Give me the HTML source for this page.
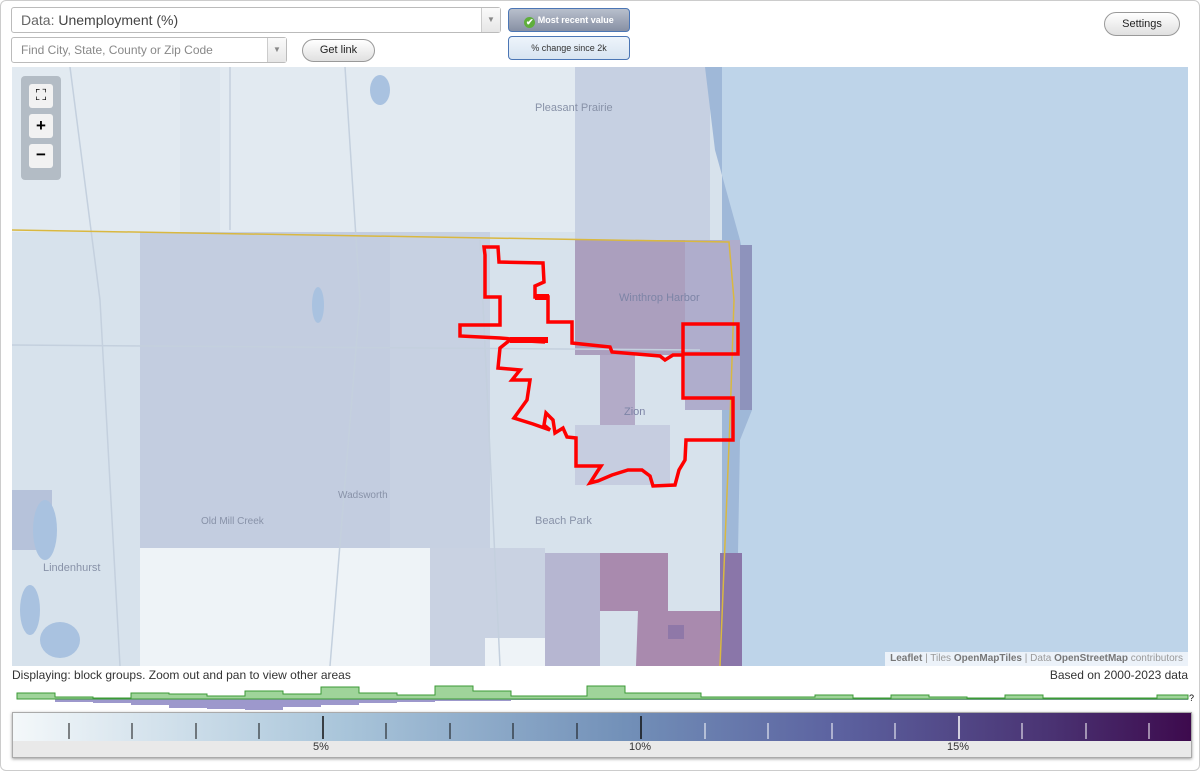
<!DOCTYPE html>
<html><head><meta charset="utf-8"><style>
body{margin:0;width:1200px;height:771px;background:#fff;font-family:"Liberation Sans",sans-serif;position:relative;overflow:hidden}
.frame{position:absolute;left:0;top:0;width:1198px;height:769px;border:1px solid #ccc;border-radius:6px}
.sel{position:absolute;background:#fff;border:1px solid #bbb;border-radius:3px;color:#444;font-size:14px;box-sizing:border-box}
.sel .arr{position:absolute;right:0;top:0;bottom:0;width:18px;border-left:1px solid #ccc;background:linear-gradient(#fafafa,#e6e6e6);color:#888;font-size:8px;text-align:center}
.btn{position:absolute;border:1px solid #999;border-radius:13px;background:linear-gradient(#fff,#e0e0e0);font-size:11px;text-align:center;color:#222;box-sizing:border-box}
.tog{position:absolute;border:1px solid #4b76b5;border-radius:4px;font-size:9px;text-align:center;box-sizing:border-box}
.lbl{position:absolute;font-size:11px;color:#8892a8}
</style></head><body>
<div class="frame"></div>
<div class="sel" style="left:11px;top:7px;width:490px;height:26px;line-height:24px;padding-left:9px"><span style="color:#666">Data:</span> Unemployment (%)<div class="arr" style="line-height:24px">▼</div></div>
<div class="sel" style="left:11px;top:37px;width:276px;height:26px;line-height:24px;padding-left:9px;font-size:12px;color:#888">Find City, State, County or Zip Code<div class="arr" style="line-height:24px">▼</div></div>
<div class="btn" style="left:302px;top:39px;width:73px;height:23px;line-height:21px">Get link</div>
<div class="tog" style="left:508px;top:8px;width:122px;height:24px;line-height:22px;background:linear-gradient(#b8bfcc,#8790a4);color:#fff;font-weight:bold"><span style="display:inline-block;width:11px;height:11px;border-radius:50%;background:#5fae3c;color:#fff;font-size:9px;line-height:11px;vertical-align:-2px">✔</span> Most recent value</div>
<div class="tog" style="left:508px;top:36px;width:122px;height:24px;line-height:22px;background:linear-gradient(#eef4fb,#d8e4f1);color:#333">% change since 2k</div>
<div class="btn" style="left:1104px;top:12px;width:76px;height:24px;line-height:22px">Settings</div>

<div style="position:absolute;left:12px;top:67px;width:1176px;height:599px;overflow:hidden;background:#bed4e9">
<svg width="1176" height="599" viewBox="12 67 1176 599" style="position:absolute;left:0;top:0">
<rect x="12" y="67" width="710" height="599" fill="#d7e2ec"/>
<rect x="12" y="67" width="568" height="165" fill="#e2eaf1"/>
<rect x="180" y="67" width="40" height="165" fill="#dde6ee"/>
<rect x="575" y="67" width="135" height="175" fill="#c6d0e2"/>
<path d="M705 67 L715 150 L740 240 L752 300 L752 410 L740 440 L738 553 L742 666 L722 666 L722 67Z" fill="#9fb8d8"/>
<rect x="140" y="232" width="250" height="316" fill="#c3cde0"/>
<rect x="390" y="232" width="100" height="316" fill="#c7d1e2"/>
<rect x="12" y="490" width="40" height="60" fill="#b6c2da"/>
<rect x="575" y="240" width="110" height="115" fill="#ab9fbe"/>
<rect x="685" y="240" width="55" height="170" fill="#afadcc"/>
<rect x="740" y="245" width="12" height="165" fill="#8e93bc"/>
<rect x="600" y="355" width="35" height="80" fill="#b3abc8"/>
<rect x="575" y="425" width="95" height="60" fill="#c6cde0"/>
<rect x="140" y="548" width="290" height="118" fill="#eef3f7"/>
<rect x="430" y="548" width="115" height="118" fill="#c9d2e2"/>
<rect x="485" y="638" width="60" height="28" fill="#eef3f7"/>
<rect x="545" y="553" width="55" height="113" fill="#b6b6d1"/>
<rect x="600" y="553" width="68" height="58" fill="#a98aae"/>
<path d="M638 611 L720 611 L720 666 L636 666Z" fill="#a98aae"/>
<rect x="720" y="553" width="22" height="113" fill="#8a76a9"/>
<rect x="668" y="625" width="16" height="14" fill="#8f78a8"/>
<g fill="none" stroke="#c4d0de" stroke-width="1.5"><path d="M230 67 L230 230"/><path d="M12 345 L700 350"/><path d="M480 240 L500 666"/><path d="M345 67 L360 300 L330 666"/><path d="M70 67 L100 300 L120 666"/></g>
<path d="M12 230 L729 242 L734 300 L730 420 L720 666" fill="none" stroke="#d9b840" stroke-width="1.5"/>
<g fill="#a9c2e0"><ellipse cx="380" cy="90" rx="10" ry="15"/><ellipse cx="318" cy="305" rx="6" ry="18"/><ellipse cx="45" cy="530" rx="12" ry="30"/><ellipse cx="30" cy="610" rx="10" ry="25"/><ellipse cx="60" cy="640" rx="20" ry="18"/></g>
<path d="M485 255 L484 247 L498 247 L499 262 L543 263 L544 282 L535 286 L535 297 L548 297 L548 322 L572 322 L572 343 L610 347 L612 352 L660 356 L665 360 L673 355 L683 355 L683 324 L738 324 L738 354 L683 354 L683 398 L733 398 L733 440 L686 440 L685 460 L679 470 L675 485 L653 486 L650 476 L642 470 L628 470 L612 475 L598 481 L590 483 L597 472 L601 466 L576 466 L576 438 L567 437 L563 428 L555 433 L553 420 L546 413 L544 425 L550 430 L533 424 L514 418 L527 400 L530 380 L512 380 L520 370 L498 368 L500 348 L510 340 L545 342 L500 338 L460 336 L460 325 L500 325 L500 297 L485 297Z" fill="none" stroke="#f00" stroke-width="3.5" stroke-linejoin="miter"/>
<rect x="535" y="294" width="14" height="6" fill="#f00"/>
<rect x="510" y="337" width="38" height="6" fill="#f00"/>
</svg>
<div class="lbl" style="left:523px;top:35px">Pleasant Prairie</div>
<div class="lbl" style="left:607px;top:225px;color:#7d84a6">Winthrop Harbor</div>
<div class="lbl" style="left:612px;top:339px;color:#7d84a6">Zion</div>
<div class="lbl" style="left:326px;top:423px;font-size:10px">Wadsworth</div>
<div class="lbl" style="left:189px;top:449px;font-size:10px">Old Mill Creek</div>
<div class="lbl" style="left:523px;top:448px">Beach Park</div>
<div class="lbl" style="left:31px;top:495px">Lindenhurst</div>
<div style="position:absolute;left:9px;top:9px;width:40px;height:104px;background:rgba(140,150,160,.55);border-radius:4px"></div>
<div style="position:absolute;left:17px;top:17px;width:24px;height:24px;background:#f2f2f2;border-radius:3px;text-align:center;font-size:15px;line-height:24px">⛶</div>
<div style="position:absolute;left:17px;top:47px;width:24px;height:24px;background:#f2f2f2;border-radius:3px;text-align:center;font-size:17px;font-weight:bold;line-height:24px">+</div>
<div style="position:absolute;left:17px;top:77px;width:24px;height:24px;background:#f2f2f2;border-radius:3px;text-align:center;font-size:17px;font-weight:bold;line-height:22px">−</div>
<div style="position:absolute;right:0;bottom:0;height:14px;padding:0 5px;background:rgba(255,255,255,.7);font-size:10px;color:#999;line-height:14px"><b style="color:#777">Leaflet</b> | Tiles <b style="color:#777">OpenMapTiles</b> | Data <b style="color:#777">OpenStreetMap</b> contributors</div>
</div>

<div style="position:absolute;left:12px;top:668px;font-size:12px;color:#333">Displaying: block groups. Zoom out and pan to view other areas</div>
<div style="position:absolute;right:12px;top:668px;font-size:12px;color:#333">Based on 2000-2023 data</div>

<svg width="1200" height="40" style="position:absolute;left:0;top:682px">
<path d="M17 17 H55 V20 H93 V21 H131 V23 H169 V26 H207 V27 H245 V28 H283 V25 H321 V23 H359 V21 H397 V20 H435 V19 H511 V18 H1188 V17 H17Z" fill="#9d98cc"/>
<path d="M17 17 V11 H55 V15 H93 V16 H131 V11 H169 V12 H207 V14 H245 V9 H283 V12 H321 V5 H359 V11 H397 V13 H435 V4 H473 V9 H511 V14 H549 V14 H587 V4 H625 V11 H663 V11 H701 V15 H739 V15 H777 V15 H815 V13 H853 V16 H891 V13 H929 V15 H967 V16 H1005 V13 H1043 V16 H1081 V16 H1119 V16 H1157 V13 H1188 V17Z" fill="#9fd49a" stroke="#3b9a36" stroke-width="1"/>
<text x="1189" y="19" font-size="9" font-family="Liberation Sans">?</text>
</svg>

<div style="position:absolute;left:12px;top:712px;width:1178px;height:44px;border:1px solid #aaa;box-shadow:0 1px 3px #999;background:#e9e9e9">
<div style="position:absolute;left:0;top:0;width:1178px;height:28px;background:linear-gradient(90deg,#f4f8fa,#a9c5da 28%,#7290b8 52%,#5c62a0 70%,#4a3373 88%,#3d0a4d)"></div>
<svg width="1178" height="28" style="position:absolute;left:0;top:0">
<g stroke="#111" stroke-width="1"><path d="M56 10V26M119 10V26M183 10V26M246 10V26M373 10V26M437 10V26M500 10V26M564 10V26"/><path d="M310 3V26M628 3V26" stroke-width="1.5"/></g>
<g stroke="#fff" stroke-width="1"><path d="M692 10V26M755 10V26M819 10V26M882 10V26M1009 10V26M1073 10V26M1136 10V26"/><path d="M946 3V26" stroke-width="1.5"/></g>
</svg>
<div style="position:absolute;left:300px;top:28px;font-size:11px;color:#333">5%</div>
<div style="position:absolute;left:616px;top:28px;font-size:11px;color:#333">10%</div>
<div style="position:absolute;left:934px;top:28px;font-size:11px;color:#333">15%</div>
</div>
</body></html>
